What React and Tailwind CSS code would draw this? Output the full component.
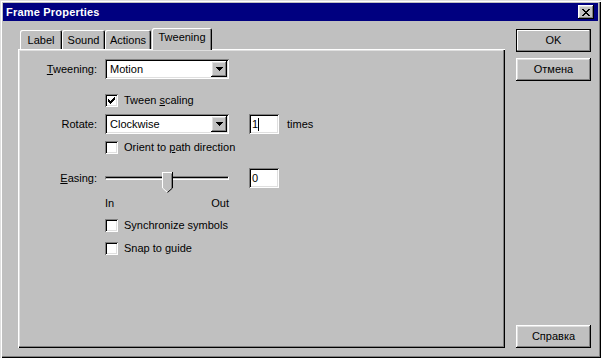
import React from "react";

const raised =
  "shadow-[inset_-1px_-1px_0_#000,inset_1px_1px_0_#fff,inset_-2px_-2px_0_#808080,inset_2px_2px_0_#dfdfdf]";
const sunken =
  "shadow-[inset_1px_1px_0_#808080,inset_-1px_-1px_0_#fff,inset_2px_2px_0_#000,inset_-2px_-2px_0_#dfdfdf]";

// 7x7 pixel check mark, one string per row
const CHECK = ["......X", ".....XX", "X...XXX", "XX.XXX.", "XXXXX..", ".XXX...", "..X...."];

const Check = ({ checked }) => (
  <div className={`w-[13px] h-[13px] bg-white flex items-center justify-center ${sunken}`}>
    {checked && (
      <svg width="7" height="7" viewBox="0 0 7 7" shapeRendering="crispEdges">
        {CHECK.map((row, y) =>
          row.split("").map((c, x) =>
            c === "X" ? <rect key={`${x}-${y}`} x={x} y={y} width="1" height="1" fill="#000" /> : null,
          ),
        )}
      </svg>
    )}
  </div>
);

const CheckRow = ({ checked, children, className = "" }) => (
  <div className={`flex items-center ml-[87px] h-[13px] ${className}`}>
    <Check checked={checked} />
    <span className="ml-[6px]">{children}</span>
  </div>
);

const Select = ({ value }) => (
  <div className={`w-[124px] h-[20px] bg-white p-[2px] flex items-center ${sunken}`}>
    <span className="flex-1 pl-[3px]">{value}</span>
    <div className={`w-[16px] h-[16px] bg-[#c0c0c0] flex items-center justify-center ${raised}`}>
      <svg width="7" height="4" viewBox="0 0 7 4" shapeRendering="crispEdges">
        <path d="M0 0h7v1h-1v1h-1v1h-1v1h-1v-1h-1v-1h-1v-1h-1z" fill="#000" />
      </svg>
    </div>
  </div>
);

const Field = ({ value, caret }) => (
  <div className={`w-[30px] h-[20px] bg-white pl-[3px] flex items-center ${sunken}`}>
    <span>{value}</span>
    {caret && <span className="w-px h-[13px] bg-black" />}
  </div>
);

const Label = ({ children }) => (
  <span className="w-[79px] text-right mr-[8px]">{children}</span>
);

const Button = ({ children, isDefault, className = "" }) => (
  <div
    className={`w-[75px] h-[23px] flex items-center justify-center ${
      isDefault
        ? "border border-black shadow-[inset_-1px_-1px_0_#808080,inset_1px_1px_0_#fff]"
        : raised
    } ${className}`}
  >
    {children}
  </div>
);

const tabs = [
  { name: "Label", w: "w-[42px]" },
  { name: "Sound", w: "w-[43px]" },
  { name: "Actions", w: "w-[46px]" },
];

export default function App() {
  return (
    <div
      className="w-[601px] h-[358px] bg-[#c0c0c0] p-[3px] flex flex-col text-[11px] leading-[13px] text-black font-['Liberation_Sans',Arial,sans-serif] shadow-[inset_1px_1px_0_#dfdfdf,inset_2px_2px_0_#fff,inset_-1px_-1px_0_#000,inset_-2px_-2px_0_#808080]"
    >
      {/* Title bar */}
      <div className="h-[18px] bg-[#000080] flex items-center justify-between pl-[3px] pr-[4px]">
        <span className="text-white font-bold tracking-[0.2px]">Frame Properties</span>
        <div className={`w-[16px] h-[14px] bg-[#c0c0c0] flex items-center justify-center ${raised}`}>
          <svg width="8" height="7" viewBox="0 0 8 7" shapeRendering="crispEdges">
            <path
              d="M0 0h2v1h1v1h2v-1h1v-1h2v1h-1v1h-1v1h-1v1h1v1h1v1h1v1h-2v-1h-1v-1h-2v1h-1v1h-2v-1h1v-1h1v-1h1v-1h-1v-1h-1v-1h-1z"
              fill="#000"
            />
          </svg>
        </div>
      </div>

      {/* Body */}
      <div className="flex flex-1 pl-[15px] pr-[7px] pt-[7px] pb-[7px] gap-[11px]">
        {/* Tab control */}
        <div className="w-[487px] flex flex-col">
          <div className="h-[21px] flex items-end pl-[2px]">
            {tabs.map((t) => (
              <div
                key={t.name}
                className={`${t.w} h-[19px] text-center pt-[4px] rounded-t-[2px] shadow-[inset_1px_1px_0_#fff,inset_-1px_0_0_#000,inset_-2px_0_0_#808080]`}
              >
                {t.name}
              </div>
            ))}
            <div className="relative z-10 w-[60px] h-[22px] ml-[1px] mb-[-1px] bg-[#c0c0c0] text-center pt-[3px] rounded-t-[2px] shadow-[inset_1px_1px_0_#fff,inset_-1px_0_0_#000,inset_-2px_0_0_#808080]">
              Tweening
            </div>
          </div>

          <div className="flex-1 pt-[10px] shadow-[inset_1px_1px_0_#fff,inset_-1px_-1px_0_#000,inset_-2px_-2px_0_#808080,inset_2px_2px_0_#dfdfdf]">
            <div className="flex items-center h-[20px]">
              <Label>
                <span className="underline">T</span>weening:
              </Label>
              <Select value="Motion" />
            </div>

            <CheckRow checked className="mt-[15px]">
              Tween <span className="underline">s</span>caling
            </CheckRow>

            <div className="flex items-center h-[20px] mt-[7px]">
              <Label>Rotate:</Label>
              <Select value="Clockwise" />
              <div className="ml-[20px]">
                <Field value="1" caret />
              </div>
              <span className="ml-[8px]">times</span>
            </div>

            <CheckRow className="mt-[7px]">
              Orient to <span className="underline">p</span>ath direction
            </CheckRow>

            <div className="flex items-center h-[20px] mt-[14px]">
              <Label>
                <span className="underline">E</span>asing:
              </Label>
              <div className="relative w-[124px] h-[20px] flex items-center">
                <div className="w-full h-[4px] border-t border-l border-[#808080] border-b border-b-white border-r border-r-white bg-[#c0c0c0]">
                  <div className="h-px bg-black" />
                </div>
                <svg
                  className="absolute left-[57px] top-[4px]"
                  width="11"
                  height="21"
                  viewBox="0 0 11 21"
                  shapeRendering="crispEdges"
                >
                  <path d="M0 0h11v16l-5.5 5l-5.5-5z" fill="#c0c0c0" />
                  <path d="M0.5 16V0.5H10" stroke="#fff" fill="none" />
                  <path d="M0.5 16l5 4.5" stroke="#fff" fill="none" shapeRendering="auto" />
                  <path d="M10.5 0V16" stroke="#000" fill="none" />
                  <path d="M10.5 16l-5 4.5" stroke="#000" fill="none" shapeRendering="auto" />
                  <path d="M9.5 1.5V15.5" stroke="#808080" fill="none" />
                </svg>
              </div>
              <div className="ml-[20px]">
                <Field value="0" />
              </div>
            </div>

            <div className="flex justify-between w-[124px] ml-[87px] mt-[9px]">
              <span>In</span>
              <span>Out</span>
            </div>

            <CheckRow className="mt-[9px]">Synchronize symbols</CheckRow>
            <CheckRow className="mt-[10px]">Snap to guide</CheckRow>
          </div>
        </div>

        {/* Buttons */}
        <div className="flex flex-col pt-[1px]">
          <Button isDefault>OK</Button>
          <Button className="mt-[6px]">Отмена</Button>
          <Button className="mt-auto">Справка</Button>
        </div>
      </div>
    </div>
  );
}
